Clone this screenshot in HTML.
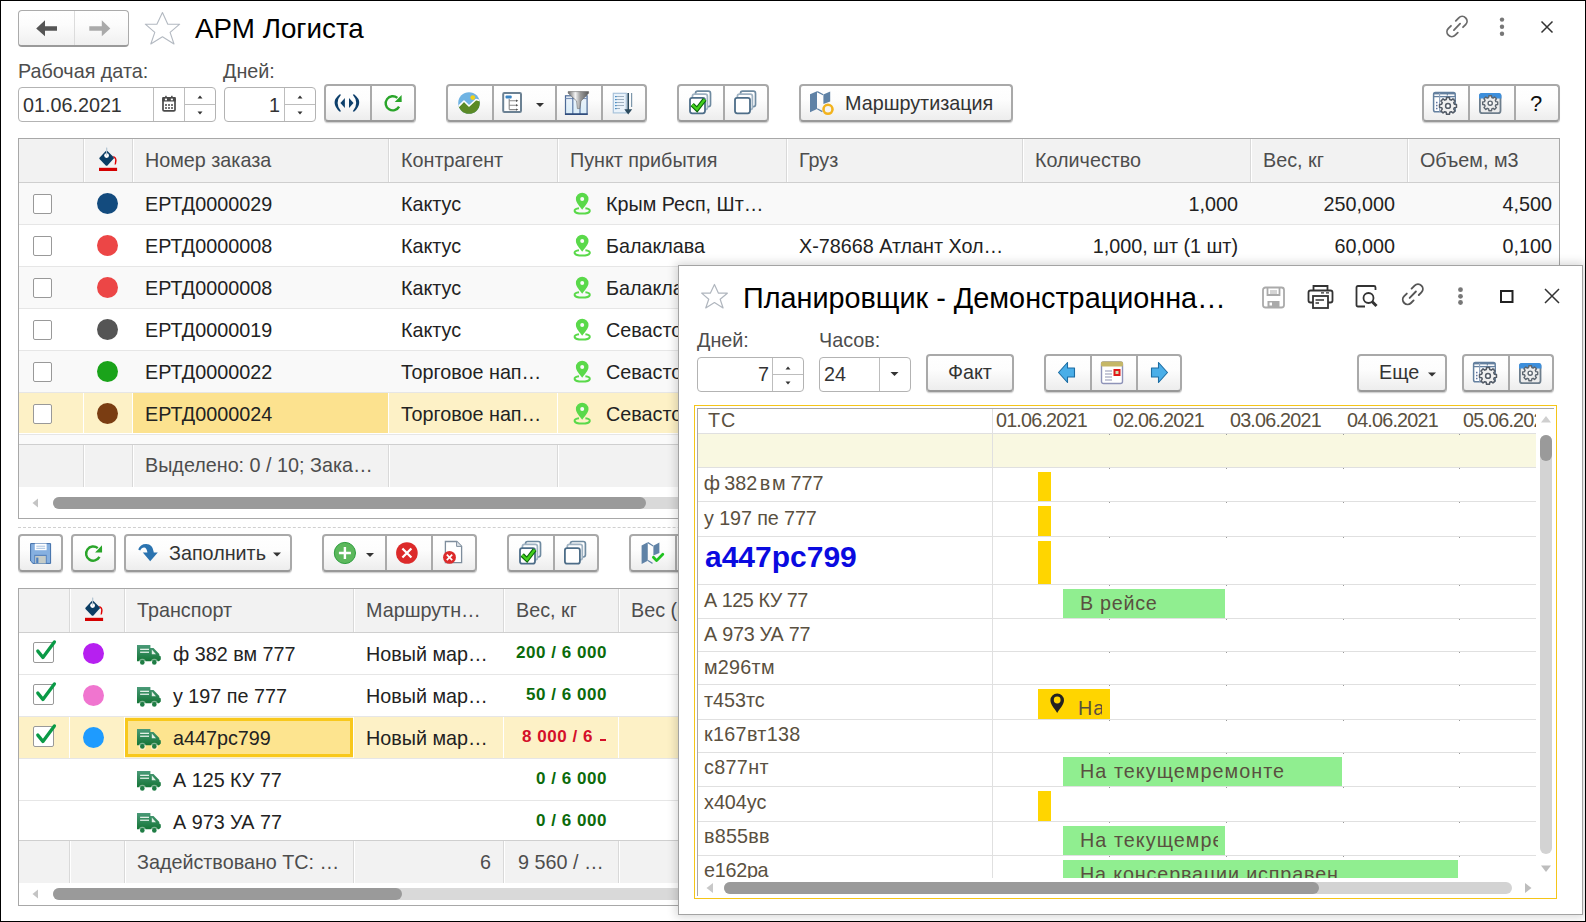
<!DOCTYPE html><html><head><meta charset="utf-8"><style>
html,body{margin:0;padding:0}
body{width:1586px;height:922px;position:relative;overflow:hidden;background:#fff;font-family:'Liberation Sans', sans-serif}
div,svg{box-sizing:content-box}
.btn{position:absolute;border:2px solid #a9a9a9;border-bottom-color:#999;border-radius:4px;background:linear-gradient(#ffffff 0%,#fdfdfd 40%,#ededed 100%);box-shadow:0 1px 0 #d2d2d2,0 2px 1px rgba(0,0,0,0.05)}
.fld{position:absolute;border:1px solid #b3b3b3;border-radius:4px;background:#fff}
</style></head><body>

<div style="position:absolute;left:0;top:0;width:1584px;height:920px;border:1px solid #000;z-index:100;pointer-events:none"></div>
<div style="position:absolute;left:18px;top:10px;width:109px;height:34px;border:1px solid #ababab;border-bottom:2px solid #9a9a9a;border-radius:4px;background:linear-gradient(#fff 0%,#fcfcfc 40%,#f0f0f0 100%)"></div>
<div style="position:absolute;left:74px;top:11px;width:1px;height:34px;background:#dcdcdc"></div>
<svg style="position:absolute;left:30px;top:15px;" width="90" height="27" viewBox="30 15 90 27"><path d="M36.2 28.5 L45 20.3 L45 26.2 L57 26.2 L57 30.7 L45 30.7 L45 36.3Z" fill="#555"/><path d="M110.3 28.5 L101.8 20.3 L101.8 26.2 L89.3 26.2 L89.3 30.7 L101.8 30.7 L101.8 36.3Z" fill="#aaa"/></svg>
<svg style="position:absolute;left:140px;top:8px;" width="46" height="42" viewBox="140 8 46 42"><path d="M162.45 12.6 L167.8 24.2 L179.7 24.2 L170.1 32.4 L174 44 L162.45 36.7 L150.8 44 L154.8 32.4 L145.3 24.2 L156.9 24.2Z" fill="none" stroke="#b3b9c1" stroke-width="1.1" stroke-linejoin="round"/></svg>
<div style="position:absolute;left:195px;top:14.87px;font-size:27.8px;line-height:27.8px;color:#000;font-weight:400;white-space:pre;">АРМ Логиста</div>
<svg style="position:absolute;left:1440px;top:10px;" width="35" height="35" viewBox="1440 10 35 35"><g fill="none" stroke="#6a6a6a" stroke-width="1.8" stroke-linecap="round"><path d="M1455.8 20.8 L1458.8 17.8 A4.8 4.8 0 0 1 1465.6 24.6 L1463 27.2"/><path d="M1451 25.8 L1448.4 28.4 A4.8 4.8 0 0 0 1455.2 35.2 L1457.8 32.6"/><path d="M1453.9 30.1 L1460.1 23.7"/></g></svg>
<svg style="position:absolute;left:1494px;top:14px;" width="16" height="26" viewBox="1494 14 16 26"><g fill="#777"><circle cx="1502" cy="19.6" r="2.2"/><circle cx="1502" cy="26.8" r="2.2"/><circle cx="1502" cy="33.8" r="2.2"/></g></svg>
<svg style="position:absolute;left:1536px;top:16px;" width="22" height="22" viewBox="1536 16 22 22"><path d="M1541.5 21.5 L1552.5 32.5 M1552.5 21.5 L1541.5 32.5" stroke="#333" stroke-width="1.5"/></svg>
<div style="position:absolute;left:18px;top:61.88px;font-size:19.75px;line-height:19.75px;color:#4d4d4d;font-weight:400;white-space:pre;">Рабочая дата:</div>
<div style="position:absolute;left:223px;top:61.88px;font-size:19.75px;line-height:19.75px;color:#4d4d4d;font-weight:400;white-space:pre;">Дней:</div>
<div class="fld" style="left:18px;top:87px;width:196px;height:33px"></div>
<div style="position:absolute;left:153px;top:88px;width:1px;height:33px;background:#bdbdbd"></div>
<div style="position:absolute;left:184px;top:88px;width:1px;height:33px;background:#bdbdbd"></div>
<div style="position:absolute;left:184px;top:104px;width:31px;height:1px;background:#bdbdbd"></div>
<div style="position:absolute;left:23px;top:96.28px;font-size:19.75px;line-height:19.75px;color:#333;font-weight:400;white-space:pre;">01.06.2021</div>
<svg style="position:absolute;left:158px;top:92px;" width="22" height="24" viewBox="158 92 22 24"><rect x="163" y="97.9" width="12" height="13" rx="1.2" fill="#fff" stroke="#4a4a4a" stroke-width="1.7"/><rect x="162.2" y="97.1" width="13.6" height="4.5" rx="1" fill="#4a4a4a"/><rect x="164.9" y="98.6" width="2.1" height="1.7" fill="#fff"/><rect x="170.8" y="98.6" width="2.1" height="1.7" fill="#fff"/><rect x="165.2" y="95.8" width="1.5" height="2" fill="#4a4a4a"/><rect x="171.1" y="95.8" width="1.5" height="2" fill="#4a4a4a"/><g fill="#2a2a2a"><rect x="165.2" y="104.2" width="1.6" height="1.6"/><rect x="168.2" y="104.2" width="1.6" height="1.6"/><rect x="171.2" y="104.2" width="1.6" height="1.6"/><rect x="165.2" y="107.2" width="1.6" height="1.6"/><rect x="168.2" y="107.2" width="1.6" height="1.6"/><rect x="171.2" y="107.2" width="1.6" height="1.6"/></g></svg>
<svg style="position:absolute;left:195.5px;top:94.4px;" width="8.0" height="6.0" viewBox="195.5 94.4 8.0 6.0"><path d="M199.5 95.9 L202.0 98.80000000000001 L197.0 98.80000000000001Z" fill="#333"/></svg>
<svg style="position:absolute;left:195.5px;top:109.6px;" width="8.0" height="6.0" viewBox="195.5 109.6 8.0 6.0"><path d="M197.0 111.19999999999999 L202.0 111.19999999999999 L199.5 114.1Z" fill="#333"/></svg>
<div class="fld" style="left:224px;top:87px;width:90px;height:33px"></div>
<div style="position:absolute;left:284px;top:88px;width:1px;height:33px;background:#bdbdbd"></div>
<div style="position:absolute;left:284px;top:104px;width:31px;height:1px;background:#bdbdbd"></div>
<div style="position:absolute;right:1306px;top:96.28px;font-size:19.75px;line-height:19.75px;color:#333;font-weight:400;white-space:pre;text-align:right;">1</div>
<svg style="position:absolute;left:296px;top:94.4px;" width="8" height="6.0" viewBox="296 94.4 8 6.0"><path d="M300 95.9 L302.5 98.80000000000001 L297.5 98.80000000000001Z" fill="#333"/></svg>
<svg style="position:absolute;left:296px;top:109.6px;" width="8" height="6.0" viewBox="296 109.6 8 6.0"><path d="M297.5 111.19999999999999 L302.5 111.19999999999999 L300 114.1Z" fill="#333"/></svg>
<div class="btn" style="left:324px;top:84px;width:88px;height:34px"></div>
<div style="position:absolute;left:370px;top:86px;width:2px;height:34px;background:#aaaaaa"></div>
<svg style="position:absolute;left:332px;top:90px;" width="30" height="26" viewBox="332 90 30 26"><g fill="#0d3f6b"><path d="M339.8 94.2 Q334.2 98.5 334.6 103 Q334.9 107.6 339.8 111.8 L341 111.3 Q337.6 107.4 337.6 103 Q337.6 98.6 341 94.7Z"/><path d="M354 94.2 Q359.6 98.5 359.2 103 Q358.9 107.6 354 111.8 L352.8 111.3 Q356.2 107.4 356.2 103 Q356.2 98.6 352.8 94.7Z"/><path d="M340.4 102.9 L344.9 97.9 L344.9 107.9Z"/><path d="M353.5 102.9 L349 97.9 L349 107.9Z"/></g></svg>
<svg style="position:absolute;left:380px;top:90px;" width="26" height="26" viewBox="380 90 26 26"><path d="M397.36 97.86 A7.1 7.1 0 1 0 399.07 106.63" fill="none" stroke="#2aa52a" stroke-width="2.4"/><path d="M401.60 94.90 L394.70 102.10 L401.70 102.10Z" fill="#2aa52a"/></svg>
<div class="btn" style="left:446px;top:84px;width:197px;height:34px"></div>
<div style="position:absolute;left:492px;top:86px;width:2px;height:34px;background:#aaaaaa"></div>
<div style="position:absolute;left:555px;top:86px;width:2px;height:34px;background:#aaaaaa"></div>
<div style="position:absolute;left:601px;top:86px;width:2px;height:34px;background:#aaaaaa"></div>
<svg style="position:absolute;left:455px;top:89px;" width="29" height="28" viewBox="455 89 29 28"><defs><clipPath id="lc"><circle cx="469" cy="103" r="10.8"/></clipPath></defs><g clip-path="url(#lc)"><rect x="455" y="89" width="30" height="30" fill="#6fb3e3"/><circle cx="472.8" cy="97.6" r="2.4" fill="#f2d21a"/><path d="M455 110 L464 101 L469 106 L476 99.5 L485 102 L485 118 L455 118Z" fill="#5b8a26" stroke="#fff" stroke-width="1.6" stroke-linejoin="round"/></g></svg>
<svg style="position:absolute;left:500px;top:90px;" width="24" height="25" viewBox="500 90 24 25"><rect x="503.2" y="93.1" width="17.8" height="18.8" rx="1.2" fill="#fff" stroke="#6b8193" stroke-width="2"/><rect x="505.5" y="95.6" width="6.2" height="3" rx="1" fill="#3a85c4"/><path d="M509.2 99 L509.2 109.6 M509.2 100.8 L516.5 100.8 M509.2 105.3 L516.5 105.3 M509.2 109.6 L516.5 109.6" stroke="#8a8a8a" stroke-width="1.1" fill="none"/><path d="M516 99.6 L518.3 100.8 L516 102Z M516 104.1 L518.3 105.3 L516 106.5Z M516 108.4 L518.3 109.6 L516 110.8Z" fill="#555"/></svg>
<svg style="position:absolute;left:534px;top:101px;" width="12" height="8" viewBox="534 101 12 8"><path d="M536 103 L544 103 L540 107Z" fill="#333"/></svg>
<svg style="position:absolute;left:562px;top:89px;" width="30" height="28" viewBox="562 89 30 28"><defs><linearGradient id="tb" x1="0" y1="0" x2="0" y2="1"><stop offset="0" stop-color="#eef4fb"/><stop offset="1" stop-color="#d8ecf8"/></linearGradient><linearGradient id="fn" x1="0" y1="0" x2="1" y2="0"><stop offset="0" stop-color="#6a6a6a"/><stop offset="0.35" stop-color="#f4f4f4"/><stop offset="0.6" stop-color="#9a9a9a"/><stop offset="1" stop-color="#5a5a5a"/></linearGradient></defs><rect x="565.5" y="95.8" width="21.6" height="18.6" fill="url(#tb)" stroke="#4d6a96" stroke-width="1.2"/><path d="M565.5 98.5 L587 98.5" stroke="#7a92b8" stroke-width="1.2"/><path d="M572.8 96 L572.8 114 M580 96 L580 114" stroke="#5a78a6" stroke-width="1.2"/><rect x="565" y="113.3" width="22.6" height="1.6" fill="#2d4a7a"/><path d="M568.2 91.6 L588.6 91.6 L588.6 93.2 L581 101 L579.8 108.6 L577.4 108.6 L576.6 101 L568.2 93.2Z" fill="url(#fn)" stroke="#666" stroke-width="0.6"/></svg>
<svg style="position:absolute;left:610px;top:90px;" width="26" height="27" viewBox="610 90 26 27"><rect x="613.3" y="93.3" width="13" height="19.6" fill="#eaf3fb" stroke="#a9c3da" stroke-width="1.2"/><g stroke="#9fb0c0" stroke-width="1.2"><path d="M616 96.5 L624 96.5 M616 99.5 L624 99.5 M616 102.5 L624 102.5 M616 105.5 L624 105.5 M616 108.5 L620 108.5"/></g><g fill="#4a90c8"><rect x="615" y="96" width="1.6" height="1.2"/><rect x="615" y="99" width="1.6" height="1.2"/><rect x="615" y="102" width="1.6" height="1.2"/><rect x="615" y="105" width="1.6" height="1.2"/><rect x="615" y="108" width="1.6" height="1.2"/></g><path d="M631.6 93 L631.6 107" stroke="#7d97ab" stroke-width="1.2"/><path d="M628.2 93 L628.2 110" stroke="#2b4a5e" stroke-width="1.6"/><path d="M624.3 109.2 L632.2 109.2 L628.2 114.6Z" fill="#2b4a5e"/></svg>
<div class="btn" style="left:677px;top:84px;width:88px;height:34px"></div>
<div style="position:absolute;left:723px;top:86px;width:2px;height:34px;background:#aaaaaa"></div>
<svg style="position:absolute;left:684px;top:86px;" width="32" height="32" viewBox="684 86 32 32"><rect x="695.5" y="91.19999999999999" width="15" height="15.5" rx="2.2" fill="#fff" stroke="#6e8aa0" stroke-width="1.7"/><rect x="692.4000000000001" y="94.1" width="15" height="15.5" rx="2.2" fill="#fff" stroke="#9fb2c2" stroke-width="1.7"/><rect x="690.0" y="97.89999999999999" width="15" height="15.4" rx="2.2" fill="#fff" stroke="#4d6d88" stroke-width="1.8"/><path d="M692.2 104.69999999999999 L697.0 109.3 L704.7 99.39999999999999" fill="none" stroke="#0a650a" stroke-width="4.6" stroke-linejoin="miter"/><path d="M692.2 104.69999999999999 L697.0 109.3 L704.7 99.39999999999999" fill="none" stroke="#43d11c" stroke-width="2.4" stroke-linejoin="miter"/></svg>
<svg style="position:absolute;left:730px;top:86px;" width="32" height="32" viewBox="730 86 32 32"><rect x="740.5" y="91.19999999999999" width="15" height="15.5" rx="2.2" fill="#fff" stroke="#6e8aa0" stroke-width="1.7"/><rect x="737.4000000000001" y="94.1" width="15" height="15.5" rx="2.2" fill="#fff" stroke="#9fb2c2" stroke-width="1.7"/><rect x="735.0" y="97.89999999999999" width="15" height="15.4" rx="2.2" fill="#fff" stroke="#4d6d88" stroke-width="1.8"/></svg>
<div class="btn" style="left:799px;top:84px;width:210px;height:34px"></div>
<svg style="position:absolute;left:806px;top:88px;" width="30" height="28" viewBox="806 88 30 28"><path d="M810 94.3 L817 91.2 L817 109 L810 112.2Z" fill="#5f82a6"/><path d="M817 91.2 L823.4 94.6 L823.4 104 L830.2 101.6 L830.2 91.4 L823.4 94.6" fill="#5f82a6"/><path d="M817.2 91.6 L823.2 94.8 M817.2 108.8 L822.4 111.6" stroke="#5f82a6" stroke-width="1.2"/><circle cx="828" cy="109.3" r="4.5" fill="#f4f4f4" stroke="#f2b31e" stroke-width="2.6"/></svg>
<div style="position:absolute;left:845px;top:94.28px;font-size:19.75px;line-height:19.75px;color:#333;font-weight:400;white-space:pre;">Маршрутизация</div>
<div class="btn" style="left:1422px;top:84px;width:134px;height:34px"></div>
<div style="position:absolute;left:1468px;top:86px;width:2px;height:34px;background:#aaaaaa"></div>
<div style="position:absolute;left:1514px;top:86px;width:2px;height:34px;background:#aaaaaa"></div>
<svg style="position:absolute;left:1430px;top:88px;" width="30" height="29" viewBox="1430 88 30 29"><rect x="1433.6" y="92.6" width="21.6" height="19.2" rx="1.8" fill="#fff" stroke="#64809f" stroke-width="1.5"/><path d="M1433.6 96.6 L1455.2 96.6" stroke="#64809f" stroke-width="1.3"/><path d="M1433.6 93.6 L1455.2 93.6" stroke="#64809f" stroke-width="1.6"/><path d="M1439.6 93 L1439.6 111.8" stroke="#8ea3bd" stroke-width="1.1"/><path d="M1447.3 93 L1447.3 95.5" stroke="#64809f" stroke-width="1.1"/><path d="M1440 97.6 L1455 97.6" stroke="#c9d4e2" stroke-width="1"/><g fill="#5f73a0"><rect x="1436" y="101.8" width="1.5" height="1.5"/><rect x="1436" y="104.8" width="1.5" height="1.5"/><rect x="1436" y="107.8" width="1.5" height="1.5"/></g><path d="M1454.36 104.14 L1456.47 104.42 L1456.47 107.38 L1454.36 107.66 L1453.74 109.15 L1455.04 110.85 L1452.95 112.94 L1451.25 111.64 L1449.76 112.26 L1449.48 114.37 L1446.52 114.37 L1446.24 112.26 L1444.75 111.64 L1443.05 112.94 L1440.96 110.85 L1442.26 109.15 L1441.64 107.66 L1439.53 107.38 L1439.53 104.42 L1441.64 104.14 L1442.26 102.65 L1440.96 100.95 L1443.05 98.86 L1444.75 100.16 L1446.24 99.54 L1446.52 97.43 L1449.48 97.43 L1449.76 99.54 L1451.25 100.16 L1452.95 98.86 L1455.04 100.95 L1453.74 102.65Z" fill="#f0f0f0" stroke="#535b66" stroke-width="1.5" stroke-linejoin="round"/><circle cx="1448" cy="105.9" r="2.4" fill="#fff" stroke="#535b66" stroke-width="1.5"/></svg>
<svg style="position:absolute;left:1476px;top:88px;" width="30" height="29" viewBox="1476 88 30 29"><rect x="1479.9" y="93.8" width="20.6" height="19.4" rx="2.5" fill="#ececec" stroke="#6e7e8c" stroke-width="1.8"/><path d="M1479 98.5 L1479 95.5 Q1479 93 1482 93 L1498.5 93 Q1501.4 93 1501.4 95.5 L1501.4 98.5Z" fill="#3d8fdc"/><path d="M1495.89 101.63 L1497.69 101.89 L1497.69 104.51 L1495.89 104.77 L1495.33 106.11 L1496.42 107.57 L1494.57 109.42 L1493.11 108.33 L1491.77 108.89 L1491.51 110.69 L1488.89 110.69 L1488.63 108.89 L1487.29 108.33 L1485.83 109.42 L1483.98 107.57 L1485.07 106.11 L1484.51 104.77 L1482.71 104.51 L1482.71 101.89 L1484.51 101.63 L1485.07 100.29 L1483.98 98.83 L1485.83 96.98 L1487.29 98.07 L1488.63 97.51 L1488.89 95.71 L1491.51 95.71 L1491.77 97.51 L1493.11 98.07 L1494.57 96.98 L1496.42 98.83 L1495.33 100.29Z" fill="#eeeeee" stroke="#5d6670" stroke-width="1.4" stroke-linejoin="round"/><circle cx="1490.2" cy="103.2" r="2.1" fill="#fff" stroke="#5d6670" stroke-width="1.4"/></svg>
<div style="position:absolute;left:1530px;top:93.38px;font-size:22px;line-height:22px;color:#111;font-weight:400;white-space:pre;">?</div>
<div style="position:absolute;left:18px;top:138px;width:1540px;height:379px;border:1px solid #a8a8a8;background:#fff"></div>
<div style="position:absolute;left:19px;top:139px;width:1540px;height:43px;background:#f2f2f2"></div>
<div style="position:absolute;left:19px;top:182px;width:1540px;height:1px;background:#cfcfcf"></div>
<div style="position:absolute;left:83px;top:139px;width:1px;height:43px;background:#d9d9d9"></div>
<div style="position:absolute;left:84px;top:139px;width:1px;height:43px;background:#fff"></div>
<div style="position:absolute;left:132px;top:139px;width:1px;height:43px;background:#d9d9d9"></div>
<div style="position:absolute;left:133px;top:139px;width:1px;height:43px;background:#fff"></div>
<div style="position:absolute;left:388px;top:139px;width:1px;height:43px;background:#d9d9d9"></div>
<div style="position:absolute;left:389px;top:139px;width:1px;height:43px;background:#fff"></div>
<div style="position:absolute;left:557px;top:139px;width:1px;height:43px;background:#d9d9d9"></div>
<div style="position:absolute;left:558px;top:139px;width:1px;height:43px;background:#fff"></div>
<div style="position:absolute;left:786px;top:139px;width:1px;height:43px;background:#d9d9d9"></div>
<div style="position:absolute;left:787px;top:139px;width:1px;height:43px;background:#fff"></div>
<div style="position:absolute;left:1022px;top:139px;width:1px;height:43px;background:#d9d9d9"></div>
<div style="position:absolute;left:1023px;top:139px;width:1px;height:43px;background:#fff"></div>
<div style="position:absolute;left:1250px;top:139px;width:1px;height:43px;background:#d9d9d9"></div>
<div style="position:absolute;left:1251px;top:139px;width:1px;height:43px;background:#fff"></div>
<div style="position:absolute;left:1407px;top:139px;width:1px;height:43px;background:#d9d9d9"></div>
<div style="position:absolute;left:1408px;top:139px;width:1px;height:43px;background:#fff"></div>
<div style="position:absolute;left:145px;top:151.28px;font-size:19.75px;line-height:19.75px;color:#4d4d4d;font-weight:400;white-space:pre;">Номер заказа</div>
<div style="position:absolute;left:401px;top:151.28px;font-size:19.75px;line-height:19.75px;color:#4d4d4d;font-weight:400;white-space:pre;">Контрагент</div>
<div style="position:absolute;left:570px;top:151.28px;font-size:19.75px;line-height:19.75px;color:#4d4d4d;font-weight:400;white-space:pre;">Пункт прибытия</div>
<div style="position:absolute;left:799px;top:151.28px;font-size:19.75px;line-height:19.75px;color:#4d4d4d;font-weight:400;white-space:pre;">Груз</div>
<div style="position:absolute;left:1035px;top:151.28px;font-size:19.75px;line-height:19.75px;color:#4d4d4d;font-weight:400;white-space:pre;">Количество</div>
<div style="position:absolute;left:1263px;top:151.28px;font-size:19.75px;line-height:19.75px;color:#4d4d4d;font-weight:400;white-space:pre;">Вес, кг</div>
<div style="position:absolute;left:1420px;top:151.28px;font-size:19.75px;line-height:19.75px;color:#4d4d4d;font-weight:400;white-space:pre;">Объем, м3</div>
<svg style="position:absolute;left:94px;top:145px;" width="25" height="27" viewBox="94 145 25 27"><path d="M106.6 147.8 L106.6 155.4" stroke="#a9bccc" stroke-width="1.2"/><path d="M106.6 150.8 Q107.19999999999999 150.8 107.69999999999999 151.3 L113.69999999999999 157.3 Q114.19999999999999 157.9 113.69999999999999 158.5 L107.69999999999999 165.3 Q106.6 166.4 105.5 165.3 L99.5 159.0 Q99.0 158.4 99.5 157.8 L105.5 151.3 Q106.0 150.8 106.6 150.8Z" fill="#0b3d64"/><circle cx="106.6" cy="155.6" r="2.4" fill="#fff"/><path d="M106.6 147.8 L106.6 155.6" stroke="#b9c9d6" stroke-width="1"/><path d="M112.8 155.8 Q116.8 157.0 116.6 160.8 L116.0 164.20000000000002 L114.6 164.8 L115.19999999999999 159.6Z" fill="#e00000"/><rect x="99.0" y="167.8" width="18.1" height="3.2" fill="#d40000"/></svg>
<div style="position:absolute;left:19px;top:183px;width:1540px;height:41px;background:#f9f9f9"></div>
<div style="position:absolute;left:19px;top:224px;width:1540px;height:1px;background:#e6e6e6"></div>
<div style="position:absolute;left:33px;top:194px;width:17px;height:18px;border:1px solid #999;border-radius:2px;background:#fff"></div>
<div style="position:absolute;left:97px;top:193px;width:21px;height:21px;border-radius:50%;background:#134b7e"></div>
<div style="position:absolute;left:145px;top:195.28px;font-size:19.75px;line-height:19.75px;color:#222;font-weight:400;white-space:pre;">ЕРТД0000029</div>
<div style="position:absolute;left:401px;top:195.28px;font-size:19.75px;line-height:19.75px;color:#222;font-weight:400;white-space:pre;">Кактус</div>
<svg style="position:absolute;left:572px;top:191px;" width="21" height="25" viewBox="572 191 21 25"><path d="M582.2 209.7 C580.0 206.6 575.9000000000001 202.8 575.9000000000001 199 A6.3 6.3 0 0 1 588.5 199 C588.5 202.8 584.4000000000001 206.6 582.2 209.7Z" fill="#5ad94a"/><circle cx="582.2" cy="199.1" r="2" fill="#fafafa"/><path d="M579.0 208.2 C572.7 208.8 572.6 213.6 582.2 213.6 C591.8000000000001 213.6 591.7 208.8 585.4000000000001 208.2" fill="none" stroke="#5ad94a" stroke-width="2"/></svg>
<div style="position:absolute;left:606px;top:195.28px;font-size:19.75px;line-height:19.75px;color:#222;font-weight:400;white-space:pre;">Крым Респ, Шт…</div>
<div style="position:absolute;right:348px;top:195.28px;font-size:19.75px;line-height:19.75px;color:#222;font-weight:400;white-space:pre;text-align:right;">1,000</div>
<div style="position:absolute;right:191px;top:195.28px;font-size:19.75px;line-height:19.75px;color:#222;font-weight:400;white-space:pre;text-align:right;">250,000</div>
<div style="position:absolute;right:34px;top:195.28px;font-size:19.75px;line-height:19.75px;color:#222;font-weight:400;white-space:pre;text-align:right;">4,500</div>
<div style="position:absolute;left:19px;top:225px;width:1540px;height:41px;background:#ffffff"></div>
<div style="position:absolute;left:19px;top:266px;width:1540px;height:1px;background:#e6e6e6"></div>
<div style="position:absolute;left:33px;top:236px;width:17px;height:18px;border:1px solid #999;border-radius:2px;background:#fff"></div>
<div style="position:absolute;left:97px;top:235px;width:21px;height:21px;border-radius:50%;background:#ec4646"></div>
<div style="position:absolute;left:145px;top:237.28px;font-size:19.75px;line-height:19.75px;color:#222;font-weight:400;white-space:pre;">ЕРТД0000008</div>
<div style="position:absolute;left:401px;top:237.28px;font-size:19.75px;line-height:19.75px;color:#222;font-weight:400;white-space:pre;">Кактус</div>
<svg style="position:absolute;left:572px;top:233px;" width="21" height="25" viewBox="572 233 21 25"><path d="M582.2 251.7 C580.0 248.6 575.9000000000001 244.8 575.9000000000001 241 A6.3 6.3 0 0 1 588.5 241 C588.5 244.8 584.4000000000001 248.6 582.2 251.7Z" fill="#5ad94a"/><circle cx="582.2" cy="241.1" r="2" fill="#fafafa"/><path d="M579.0 250.2 C572.7 250.8 572.6 255.6 582.2 255.6 C591.8000000000001 255.6 591.7 250.8 585.4000000000001 250.2" fill="none" stroke="#5ad94a" stroke-width="2"/></svg>
<div style="position:absolute;left:606px;top:237.28px;font-size:19.75px;line-height:19.75px;color:#222;font-weight:400;white-space:pre;">Балаклава</div>
<div style="position:absolute;left:799px;top:237.28px;font-size:19.75px;line-height:19.75px;color:#222;font-weight:400;white-space:pre;">X-78668 Атлант Хол…</div>
<div style="position:absolute;right:348px;top:237.28px;font-size:19.75px;line-height:19.75px;color:#222;font-weight:400;white-space:pre;text-align:right;">1,000, шт (1 шт)</div>
<div style="position:absolute;right:191px;top:237.28px;font-size:19.75px;line-height:19.75px;color:#222;font-weight:400;white-space:pre;text-align:right;">60,000</div>
<div style="position:absolute;right:34px;top:237.28px;font-size:19.75px;line-height:19.75px;color:#222;font-weight:400;white-space:pre;text-align:right;">0,100</div>
<div style="position:absolute;left:19px;top:267px;width:1540px;height:41px;background:#f9f9f9"></div>
<div style="position:absolute;left:19px;top:308px;width:1540px;height:1px;background:#e6e6e6"></div>
<div style="position:absolute;left:33px;top:278px;width:17px;height:18px;border:1px solid #999;border-radius:2px;background:#fff"></div>
<div style="position:absolute;left:97px;top:277px;width:21px;height:21px;border-radius:50%;background:#ec4646"></div>
<div style="position:absolute;left:145px;top:279.28px;font-size:19.75px;line-height:19.75px;color:#222;font-weight:400;white-space:pre;">ЕРТД0000008</div>
<div style="position:absolute;left:401px;top:279.28px;font-size:19.75px;line-height:19.75px;color:#222;font-weight:400;white-space:pre;">Кактус</div>
<svg style="position:absolute;left:572px;top:275px;" width="21" height="25" viewBox="572 275 21 25"><path d="M582.2 293.7 C580.0 290.6 575.9000000000001 286.8 575.9000000000001 283 A6.3 6.3 0 0 1 588.5 283 C588.5 286.8 584.4000000000001 290.6 582.2 293.7Z" fill="#5ad94a"/><circle cx="582.2" cy="283.1" r="2" fill="#fafafa"/><path d="M579.0 292.2 C572.7 292.8 572.6 297.6 582.2 297.6 C591.8000000000001 297.6 591.7 292.8 585.4000000000001 292.2" fill="none" stroke="#5ad94a" stroke-width="2"/></svg>
<div style="position:absolute;left:606px;top:279.28px;font-size:19.75px;line-height:19.75px;color:#222;font-weight:400;white-space:pre;">Балаклава</div>
<div style="position:absolute;left:19px;top:309px;width:1540px;height:41px;background:#ffffff"></div>
<div style="position:absolute;left:19px;top:350px;width:1540px;height:1px;background:#e6e6e6"></div>
<div style="position:absolute;left:33px;top:320px;width:17px;height:18px;border:1px solid #999;border-radius:2px;background:#fff"></div>
<div style="position:absolute;left:97px;top:319px;width:21px;height:21px;border-radius:50%;background:#555555"></div>
<div style="position:absolute;left:145px;top:321.28px;font-size:19.75px;line-height:19.75px;color:#222;font-weight:400;white-space:pre;">ЕРТД0000019</div>
<div style="position:absolute;left:401px;top:321.28px;font-size:19.75px;line-height:19.75px;color:#222;font-weight:400;white-space:pre;">Кактус</div>
<svg style="position:absolute;left:572px;top:317px;" width="21" height="25" viewBox="572 317 21 25"><path d="M582.2 335.7 C580.0 332.6 575.9000000000001 328.8 575.9000000000001 325 A6.3 6.3 0 0 1 588.5 325 C588.5 328.8 584.4000000000001 332.6 582.2 335.7Z" fill="#5ad94a"/><circle cx="582.2" cy="325.1" r="2" fill="#fafafa"/><path d="M579.0 334.2 C572.7 334.8 572.6 339.6 582.2 339.6 C591.8000000000001 339.6 591.7 334.8 585.4000000000001 334.2" fill="none" stroke="#5ad94a" stroke-width="2"/></svg>
<div style="position:absolute;left:606px;top:321.28px;font-size:19.75px;line-height:19.75px;color:#222;font-weight:400;white-space:pre;">Севастополь</div>
<div style="position:absolute;left:19px;top:351px;width:1540px;height:41px;background:#f9f9f9"></div>
<div style="position:absolute;left:19px;top:392px;width:1540px;height:1px;background:#e6e6e6"></div>
<div style="position:absolute;left:33px;top:362px;width:17px;height:18px;border:1px solid #999;border-radius:2px;background:#fff"></div>
<div style="position:absolute;left:97px;top:361px;width:21px;height:21px;border-radius:50%;background:#1aa31a"></div>
<div style="position:absolute;left:145px;top:363.28px;font-size:19.75px;line-height:19.75px;color:#222;font-weight:400;white-space:pre;">ЕРТД0000022</div>
<div style="position:absolute;left:401px;top:363.28px;font-size:19.75px;line-height:19.75px;color:#222;font-weight:400;white-space:pre;">Торговое нап…</div>
<svg style="position:absolute;left:572px;top:359px;" width="21" height="25" viewBox="572 359 21 25"><path d="M582.2 377.7 C580.0 374.6 575.9000000000001 370.8 575.9000000000001 367 A6.3 6.3 0 0 1 588.5 367 C588.5 370.8 584.4000000000001 374.6 582.2 377.7Z" fill="#5ad94a"/><circle cx="582.2" cy="367.1" r="2" fill="#fafafa"/><path d="M579.0 376.2 C572.7 376.8 572.6 381.6 582.2 381.6 C591.8000000000001 381.6 591.7 376.8 585.4000000000001 376.2" fill="none" stroke="#5ad94a" stroke-width="2"/></svg>
<div style="position:absolute;left:606px;top:363.28px;font-size:19.75px;line-height:19.75px;color:#222;font-weight:400;white-space:pre;">Севастополь</div>
<div style="position:absolute;left:19px;top:393px;width:1540px;height:41px;background:#fdf1c6"></div>
<div style="position:absolute;left:19px;top:434px;width:1540px;height:1px;background:#e6e6e6"></div>
<div style="position:absolute;left:133px;top:393px;width:255px;height:41px;background:#fce28f"></div>
<div style="position:absolute;left:83px;top:393px;width:1px;height:41px;background:#fff"></div>
<div style="position:absolute;left:132px;top:393px;width:1px;height:41px;background:#fff"></div>
<div style="position:absolute;left:388px;top:393px;width:1px;height:41px;background:#fff"></div>
<div style="position:absolute;left:557px;top:393px;width:1px;height:41px;background:#fff"></div>
<div style="position:absolute;left:786px;top:393px;width:1px;height:41px;background:#fff"></div>
<div style="position:absolute;left:1022px;top:393px;width:1px;height:41px;background:#fff"></div>
<div style="position:absolute;left:1250px;top:393px;width:1px;height:41px;background:#fff"></div>
<div style="position:absolute;left:1407px;top:393px;width:1px;height:41px;background:#fff"></div>
<div style="position:absolute;left:19px;top:433px;width:1540px;height:1px;background:#fff"></div>
<div style="position:absolute;left:33px;top:404px;width:17px;height:18px;border:1px solid #999;border-radius:2px;background:#fff"></div>
<div style="position:absolute;left:97px;top:403px;width:21px;height:21px;border-radius:50%;background:#7a3d12"></div>
<div style="position:absolute;left:145px;top:405.28px;font-size:19.75px;line-height:19.75px;color:#222;font-weight:400;white-space:pre;">ЕРТД0000024</div>
<div style="position:absolute;left:401px;top:405.28px;font-size:19.75px;line-height:19.75px;color:#222;font-weight:400;white-space:pre;">Торговое нап…</div>
<svg style="position:absolute;left:572px;top:401px;" width="21" height="25" viewBox="572 401 21 25"><path d="M582.2 419.7 C580.0 416.6 575.9000000000001 412.8 575.9000000000001 409 A6.3 6.3 0 0 1 588.5 409 C588.5 412.8 584.4000000000001 416.6 582.2 419.7Z" fill="#5ad94a"/><circle cx="582.2" cy="409.1" r="2" fill="#fafafa"/><path d="M579.0 418.2 C572.7 418.8 572.6 423.6 582.2 423.6 C591.8000000000001 423.6 591.7 418.8 585.4000000000001 418.2" fill="none" stroke="#5ad94a" stroke-width="2"/></svg>
<div style="position:absolute;left:606px;top:405.28px;font-size:19.75px;line-height:19.75px;color:#222;font-weight:400;white-space:pre;">Севастополь</div>
<div style="position:absolute;left:19px;top:435px;width:1540px;height:9px;background:#fafafa"></div>
<div style="position:absolute;left:19px;top:444px;width:1540px;height:1px;background:#cfcfcf"></div>
<div style="position:absolute;left:19px;top:445px;width:1540px;height:42px;background:#f2f2f2"></div>
<div style="position:absolute;left:83px;top:445px;width:1px;height:42px;background:#d9d9d9"></div>
<div style="position:absolute;left:84px;top:445px;width:1px;height:42px;background:#fff"></div>
<div style="position:absolute;left:132px;top:445px;width:1px;height:42px;background:#d9d9d9"></div>
<div style="position:absolute;left:133px;top:445px;width:1px;height:42px;background:#fff"></div>
<div style="position:absolute;left:388px;top:445px;width:1px;height:42px;background:#d9d9d9"></div>
<div style="position:absolute;left:389px;top:445px;width:1px;height:42px;background:#fff"></div>
<div style="position:absolute;left:557px;top:445px;width:1px;height:42px;background:#d9d9d9"></div>
<div style="position:absolute;left:558px;top:445px;width:1px;height:42px;background:#fff"></div>
<div style="position:absolute;left:786px;top:445px;width:1px;height:42px;background:#d9d9d9"></div>
<div style="position:absolute;left:787px;top:445px;width:1px;height:42px;background:#fff"></div>
<div style="position:absolute;left:1022px;top:445px;width:1px;height:42px;background:#d9d9d9"></div>
<div style="position:absolute;left:1023px;top:445px;width:1px;height:42px;background:#fff"></div>
<div style="position:absolute;left:1250px;top:445px;width:1px;height:42px;background:#d9d9d9"></div>
<div style="position:absolute;left:1251px;top:445px;width:1px;height:42px;background:#fff"></div>
<div style="position:absolute;left:1407px;top:445px;width:1px;height:42px;background:#d9d9d9"></div>
<div style="position:absolute;left:1408px;top:445px;width:1px;height:42px;background:#fff"></div>
<div style="position:absolute;left:145px;top:456.28px;font-size:19.75px;line-height:19.75px;color:#4d4d4d;font-weight:400;white-space:pre;">Выделено: 0 / 10; Зака…</div>
<div style="position:absolute;left:53px;top:497px;width:1490px;height:12px;background:#d9d9d9;border-radius:6px"></div>
<div style="position:absolute;left:53px;top:497px;width:593px;height:12px;background:#9a9a9a;border-radius:6px"></div>
<svg style="position:absolute;left:31px;top:497px;" width="8" height="12" viewBox="0 0 8 12"><path d="M7 1.5 L7 10.5 L1.5 6Z" fill="#c4c4c4"/></svg>
<div style="position:absolute;left:18px;top:527px;width:1542px;height:0;border-top:1px dashed #d0d0d0"></div>
<div class="btn" style="left:18px;top:534px;width:41px;height:34px"></div>
<svg style="position:absolute;left:28px;top:541px;" width="26" height="25" viewBox="28 541 26 25"><path d="M30.6 543.6 L50.6 543.6 L50.6 563.4 L33 563.4 L30.6 561Z" fill="#86b0e0" stroke="#3f6ea8" stroke-width="1"/><rect x="34.8" y="543.6" width="11.8" height="6.6" fill="#fff"/><path d="M36.3 546.2 L45.2 546.2 M36.3 548.3 L45.2 548.3" stroke="#8fb0d6" stroke-width="0.8"/><rect x="34.2" y="554.8" width="12.6" height="8.6" fill="#5b86bf"/><rect x="35.2" y="556" width="10.6" height="7.4" fill="#c5ccc8"/><rect x="36.2" y="557.6" width="2.2" height="5.6" fill="#4b7fc0"/></svg>
<div class="btn" style="left:71px;top:534px;width:41px;height:34px"></div>
<svg style="position:absolute;left:80px;top:540px;" width="26" height="26" viewBox="80 540 26 26"><path d="M97.76 548.16 A7.1 7.1 0 1 0 99.47 556.93" fill="none" stroke="#2aa52a" stroke-width="2.4"/><path d="M102.00 545.20 L95.10 552.40 L102.10 552.40Z" fill="#2aa52a"/></svg>
<div class="btn" style="left:124px;top:534px;width:164px;height:34px"></div>
<svg style="position:absolute;left:134px;top:541px;" width="28" height="23" viewBox="134 541 28 23"><path d="M138.2 549.6 Q140 544 146.2 544 Q152.6 544.2 153.6 551.5 L153.8 552.4 L157.8 552.4 L150.2 561.2 L142.8 552.4 L147.4 552.4 L147.2 551.5 Q146.6 547.6 144.2 547.4 Q141.6 547.3 140.2 550.6Z" fill="#2a73b0"/></svg>
<div style="position:absolute;left:169px;top:543.88px;font-size:19.75px;line-height:19.75px;color:#333;font-weight:400;white-space:pre;">Заполнить</div>
<svg style="position:absolute;left:271px;top:550px;" width="12" height="8" viewBox="271 550 12 8"><path d="M273 552.6 L281 552.6 L277 556.6Z" fill="#333"/></svg>
<div class="btn" style="left:322px;top:534px;width:151px;height:34px"></div>
<div style="position:absolute;left:385px;top:536px;width:2px;height:34px;background:#aaaaaa"></div>
<div style="position:absolute;left:431px;top:536px;width:2px;height:34px;background:#aaaaaa"></div>
<svg style="position:absolute;left:332px;top:541px;" width="26" height="25" viewBox="332 541 26 25"><circle cx="344.9" cy="553" r="10.6" fill="#5cb85c" stroke="#2f9e3f" stroke-width="1"/><path d="M344.9 547 L344.9 559 M338.9 553 L350.9 553" stroke="#fff" stroke-width="2.4"/></svg>
<svg style="position:absolute;left:364px;top:551px;" width="12" height="8" viewBox="364 551 12 8"><path d="M366 553 L374 553 L370 557Z" fill="#333"/></svg>
<svg style="position:absolute;left:394px;top:541px;" width="26" height="25" viewBox="394 541 26 25"><circle cx="406.9" cy="553" r="10.8" fill="#dc2a2a"/><path d="M402.4 548.5 L411.4 557.5 M411.4 548.5 L402.4 557.5" stroke="#fff" stroke-width="2.3"/></svg>
<svg style="position:absolute;left:440px;top:539px;" width="26" height="27" viewBox="440 539 26 27"><path d="M445.4 541.5 L456.8 541.5 L461.6 546.3 L461.6 562.6 L445.4 562.6Z" fill="#fff" stroke="#7e8d9c" stroke-width="1.3"/><path d="M456.6 541.6 L456.6 546.4 L461.5 546.4" fill="#dfe5ea" stroke="#7e8d9c" stroke-width="1"/><circle cx="449.5" cy="557.4" r="6.4" fill="#dc2a2a"/><path d="M446.8 554.7 L452.2 560.1 M452.2 554.7 L446.8 560.1" stroke="#fff" stroke-width="1.7"/></svg>
<div class="btn" style="left:507px;top:534px;width:88px;height:34px"></div>
<div style="position:absolute;left:553px;top:536px;width:2px;height:34px;background:#aaaaaa"></div>
<svg style="position:absolute;left:514px;top:536px;" width="32" height="32" viewBox="514 536 32 32"><rect x="525.5" y="541.5" width="15" height="15.5" rx="2.2" fill="#fff" stroke="#6e8aa0" stroke-width="1.7"/><rect x="522.4000000000001" y="544.4" width="15" height="15.5" rx="2.2" fill="#fff" stroke="#9fb2c2" stroke-width="1.7"/><rect x="520.0" y="548.1999999999999" width="15" height="15.4" rx="2.2" fill="#fff" stroke="#4d6d88" stroke-width="1.8"/><path d="M522.2 555.0 L527.0 559.6 L534.7 549.6999999999999" fill="none" stroke="#0a650a" stroke-width="4.6" stroke-linejoin="miter"/><path d="M522.2 555.0 L527.0 559.6 L534.7 549.6999999999999" fill="none" stroke="#43d11c" stroke-width="2.4" stroke-linejoin="miter"/></svg>
<svg style="position:absolute;left:559px;top:536px;" width="32" height="32" viewBox="559 536 32 32"><rect x="570.4" y="541.5" width="15" height="15.5" rx="2.2" fill="#fff" stroke="#6e8aa0" stroke-width="1.7"/><rect x="567.3000000000001" y="544.4" width="15" height="15.5" rx="2.2" fill="#fff" stroke="#9fb2c2" stroke-width="1.7"/><rect x="564.9" y="548.1999999999999" width="15" height="15.4" rx="2.2" fill="#fff" stroke="#4d6d88" stroke-width="1.8"/></svg>
<div class="btn" style="left:629px;top:534px;width:107px;height:34px"></div>
<div style="position:absolute;left:675px;top:536px;width:2px;height:34px;background:#aaaaaa"></div>
<svg style="position:absolute;left:636px;top:538px;" width="32" height="28" viewBox="636 538 32 28"><g transform="translate(641.6 542.2) scale(0.88 1.04) translate(-810 -91.2)"><path d="M810 94.3 L817 91.2 L817 109 L810 112.2Z" fill="#5f82a6"/><path d="M817 91.2 L823.4 94.6 L823.4 104 L830.2 101.6 L830.2 91.4 L823.4 94.6" fill="#5f82a6"/><path d="M817.2 91.6 L823.2 94.8 M817.2 108.8 L822.4 111.6" stroke="#5f82a6" stroke-width="1.2"/></g><path d="M653.4 557.2 L656.6 560.6 L662.8 554.2" fill="none" stroke="#1fc21f" stroke-width="2.8" stroke-linecap="round" stroke-linejoin="round"/></svg>
<div style="position:absolute;left:18px;top:588px;width:1540px;height:316px;border:1px solid #a8a8a8;background:#fff"></div>
<div style="position:absolute;left:19px;top:589px;width:1540px;height:43px;background:#f2f2f2"></div>
<div style="position:absolute;left:19px;top:632px;width:1540px;height:1px;background:#cfcfcf"></div>
<div style="position:absolute;left:69px;top:589px;width:1px;height:43px;background:#d9d9d9"></div>
<div style="position:absolute;left:70px;top:589px;width:1px;height:43px;background:#fff"></div>
<div style="position:absolute;left:124px;top:589px;width:1px;height:43px;background:#d9d9d9"></div>
<div style="position:absolute;left:125px;top:589px;width:1px;height:43px;background:#fff"></div>
<div style="position:absolute;left:353px;top:589px;width:1px;height:43px;background:#d9d9d9"></div>
<div style="position:absolute;left:354px;top:589px;width:1px;height:43px;background:#fff"></div>
<div style="position:absolute;left:503px;top:589px;width:1px;height:43px;background:#d9d9d9"></div>
<div style="position:absolute;left:504px;top:589px;width:1px;height:43px;background:#fff"></div>
<div style="position:absolute;left:618px;top:589px;width:1px;height:43px;background:#d9d9d9"></div>
<div style="position:absolute;left:619px;top:589px;width:1px;height:43px;background:#fff"></div>
<div style="position:absolute;left:137px;top:601.28px;font-size:19.75px;line-height:19.75px;color:#4d4d4d;font-weight:400;white-space:pre;">Транспорт</div>
<div style="position:absolute;left:366px;top:601.28px;font-size:19.75px;line-height:19.75px;color:#4d4d4d;font-weight:400;white-space:pre;">Маршрутн…</div>
<div style="position:absolute;left:516px;top:601.28px;font-size:19.75px;line-height:19.75px;color:#4d4d4d;font-weight:400;white-space:pre;">Вес, кг</div>
<div style="position:absolute;left:631px;top:601.28px;font-size:19.75px;line-height:19.75px;color:#4d4d4d;font-weight:400;white-space:pre;">Вес (кг)</div>
<svg style="position:absolute;left:80px;top:595px;" width="25" height="27" viewBox="80 595 25 27"><path d="M92.6 597.8 L92.6 605.4" stroke="#a9bccc" stroke-width="1.2"/><path d="M92.6 600.8 Q93.19999999999999 600.8 93.69999999999999 601.3 L99.69999999999999 607.3 Q100.19999999999999 607.9 99.69999999999999 608.5 L93.69999999999999 615.3 Q92.6 616.4 91.5 615.3 L85.5 609.0 Q85.0 608.4 85.5 607.8 L91.5 601.3 Q92.0 600.8 92.6 600.8Z" fill="#0b3d64"/><circle cx="92.6" cy="605.6" r="2.4" fill="#fff"/><path d="M92.6 597.8 L92.6 605.6" stroke="#b9c9d6" stroke-width="1"/><path d="M98.8 605.8 Q102.8 607.0 102.6 610.8 L102.0 614.1999999999999 L100.6 614.8 L101.19999999999999 609.6Z" fill="#e00000"/><rect x="85.0" y="617.8" width="18.1" height="3.2" fill="#d40000"/></svg>
<div style="position:absolute;left:19px;top:633px;width:1540px;height:41px;background:#fff"></div>
<div style="position:absolute;left:19px;top:674px;width:1540px;height:1px;background:#e6e6e6"></div>
<div style="position:absolute;left:33px;top:642px;width:19px;height:19px;border:1px solid #999;border-radius:2px;background:#fff"></div>
<svg style="position:absolute;left:30px;top:636px;" width="30" height="32" viewBox="30 636 30 32"><path d="M37.8 651.1 L42.9 657.4 L54.4 641.9" fill="none" stroke="#0a9a46" stroke-width="3.3" stroke-linecap="round" stroke-linejoin="round"/></svg>
<div style="position:absolute;left:83px;top:643px;width:21px;height:21px;border-radius:50%;background:#b620f0"></div>
<svg style="position:absolute;left:135px;top:643px;" width="29" height="25" viewBox="135 643 29 25"><defs><linearGradient id="tg645" x1="0" y1="0" x2="0" y2="1"><stop offset="0" stop-color="#4a9a78"/><stop offset="1" stop-color="#147536"/></linearGradient></defs><path d="M137 645 L150.4 645 L150.4 648.1 L153.5 648.1 L159.3 654.1 L159.3 655.6 L160.8 656.5 L160.8 659.6 L159 661.3 L137 661.3Z" fill="url(#tg645)"/><circle cx="142.3" cy="662.4" r="3.6" fill="#fff" opacity="0.45"/><circle cx="154.3" cy="662.4" r="3.6" fill="#fff" opacity="0.45"/><circle cx="142.3" cy="662.4" r="2.3" fill="#1f7d45"/><circle cx="154.3" cy="662.4" r="2.3" fill="#1f7d45"/><rect x="140.1" y="648.7" width="8.9" height="1.3" fill="#e2efe6"/><rect x="140.1" y="651.6" width="8.9" height="1.3" fill="#e2efe6"/><path d="M151.8 649.6 L151.8 654.3 L156 654.3Z" fill="#e2efe6"/></svg>
<div style="position:absolute;left:173px;top:645.28px;font-size:19.75px;line-height:19.75px;color:#222;font-weight:400;white-space:pre;">ф 382 вм 777</div>
<div style="position:absolute;left:366px;top:645.28px;font-size:19.75px;line-height:19.75px;color:#222;font-weight:400;white-space:pre;">Новый мар…</div>
<div style="position:absolute;right:979px;top:643.61px;font-size:17px;line-height:17px;color:#0b6b0b;font-weight:700;white-space:pre;text-align:right;letter-spacing:0.55px">200 / 6 000</div>
<div style="position:absolute;left:19px;top:675px;width:1540px;height:41px;background:#fff"></div>
<div style="position:absolute;left:19px;top:716px;width:1540px;height:1px;background:#e6e6e6"></div>
<div style="position:absolute;left:33px;top:684px;width:19px;height:19px;border:1px solid #999;border-radius:2px;background:#fff"></div>
<svg style="position:absolute;left:30px;top:678px;" width="30" height="32" viewBox="30 678 30 32"><path d="M37.8 693.1 L42.9 699.4 L54.4 683.9" fill="none" stroke="#0a9a46" stroke-width="3.3" stroke-linecap="round" stroke-linejoin="round"/></svg>
<div style="position:absolute;left:83px;top:685px;width:21px;height:21px;border-radius:50%;background:#f075cf"></div>
<svg style="position:absolute;left:135px;top:685px;" width="29" height="25" viewBox="135 685 29 25"><defs><linearGradient id="tg687" x1="0" y1="0" x2="0" y2="1"><stop offset="0" stop-color="#4a9a78"/><stop offset="1" stop-color="#147536"/></linearGradient></defs><path d="M137 687 L150.4 687 L150.4 690.1 L153.5 690.1 L159.3 696.1 L159.3 697.6 L160.8 698.5 L160.8 701.6 L159 703.3 L137 703.3Z" fill="url(#tg687)"/><circle cx="142.3" cy="704.4" r="3.6" fill="#fff" opacity="0.45"/><circle cx="154.3" cy="704.4" r="3.6" fill="#fff" opacity="0.45"/><circle cx="142.3" cy="704.4" r="2.3" fill="#1f7d45"/><circle cx="154.3" cy="704.4" r="2.3" fill="#1f7d45"/><rect x="140.1" y="690.7" width="8.9" height="1.3" fill="#e2efe6"/><rect x="140.1" y="693.6" width="8.9" height="1.3" fill="#e2efe6"/><path d="M151.8 691.6 L151.8 696.3 L156 696.3Z" fill="#e2efe6"/></svg>
<div style="position:absolute;left:173px;top:687.28px;font-size:19.75px;line-height:19.75px;color:#222;font-weight:400;white-space:pre;">у 197 пе 777</div>
<div style="position:absolute;left:366px;top:687.28px;font-size:19.75px;line-height:19.75px;color:#222;font-weight:400;white-space:pre;">Новый мар…</div>
<div style="position:absolute;right:979px;top:685.61px;font-size:17px;line-height:17px;color:#0b6b0b;font-weight:700;white-space:pre;text-align:right;letter-spacing:0.55px">50 / 6 000</div>
<div style="position:absolute;left:19px;top:717px;width:1540px;height:41px;background:#fdf1c6"></div>
<div style="position:absolute;left:19px;top:758px;width:1540px;height:1px;background:#e6e6e6"></div>
<div style="position:absolute;left:69px;top:717px;width:1px;height:41px;background:#fff"></div>
<div style="position:absolute;left:124px;top:717px;width:1px;height:41px;background:#fff"></div>
<div style="position:absolute;left:353px;top:717px;width:1px;height:41px;background:#fff"></div>
<div style="position:absolute;left:503px;top:717px;width:1px;height:41px;background:#fff"></div>
<div style="position:absolute;left:618px;top:717px;width:1px;height:41px;background:#fff"></div>
<div style="position:absolute;left:125px;top:718px;width:222px;height:33px;border:3px solid #f8c81c;background:#fde48f"></div>
<div style="position:absolute;left:33px;top:726px;width:19px;height:19px;border:1px solid #999;border-radius:2px;background:#fff"></div>
<svg style="position:absolute;left:30px;top:720px;" width="30" height="32" viewBox="30 720 30 32"><path d="M37.8 735.1 L42.9 741.4 L54.4 725.9" fill="none" stroke="#0a9a46" stroke-width="3.3" stroke-linecap="round" stroke-linejoin="round"/></svg>
<div style="position:absolute;left:83px;top:727px;width:21px;height:21px;border-radius:50%;background:#1e9bff"></div>
<svg style="position:absolute;left:135px;top:727px;" width="29" height="25" viewBox="135 727 29 25"><defs><linearGradient id="tg729" x1="0" y1="0" x2="0" y2="1"><stop offset="0" stop-color="#4a9a78"/><stop offset="1" stop-color="#147536"/></linearGradient></defs><path d="M137 729 L150.4 729 L150.4 732.1 L153.5 732.1 L159.3 738.1 L159.3 739.6 L160.8 740.5 L160.8 743.6 L159 745.3 L137 745.3Z" fill="url(#tg729)"/><circle cx="142.3" cy="746.4" r="3.6" fill="#fff" opacity="0.45"/><circle cx="154.3" cy="746.4" r="3.6" fill="#fff" opacity="0.45"/><circle cx="142.3" cy="746.4" r="2.3" fill="#1f7d45"/><circle cx="154.3" cy="746.4" r="2.3" fill="#1f7d45"/><rect x="140.1" y="732.7" width="8.9" height="1.3" fill="#e2efe6"/><rect x="140.1" y="735.6" width="8.9" height="1.3" fill="#e2efe6"/><path d="M151.8 733.6 L151.8 738.3 L156 738.3Z" fill="#e2efe6"/></svg>
<div style="position:absolute;left:173px;top:729.28px;font-size:19.75px;line-height:19.75px;color:#222;font-weight:400;white-space:pre;">а447рс799</div>
<div style="position:absolute;left:366px;top:729.28px;font-size:19.75px;line-height:19.75px;color:#222;font-weight:400;white-space:pre;">Новый мар…</div>
<div style="position:absolute;right:993px;top:727.61px;font-size:17px;line-height:17px;color:#d4102a;font-weight:700;white-space:pre;text-align:right;letter-spacing:0.55px">8 000 / 6</div>
<div style="position:absolute;left:600px;top:739px;width:6px;height:2px;background:#d4102a"></div>
<div style="position:absolute;left:19px;top:759px;width:1540px;height:41px;background:#fff"></div>
<div style="position:absolute;left:19px;top:800px;width:1540px;height:1px;background:#e6e6e6"></div>
<svg style="position:absolute;left:135px;top:769px;" width="29" height="25" viewBox="135 769 29 25"><defs><linearGradient id="tg771" x1="0" y1="0" x2="0" y2="1"><stop offset="0" stop-color="#4a9a78"/><stop offset="1" stop-color="#147536"/></linearGradient></defs><path d="M137 771 L150.4 771 L150.4 774.1 L153.5 774.1 L159.3 780.1 L159.3 781.6 L160.8 782.5 L160.8 785.6 L159 787.3 L137 787.3Z" fill="url(#tg771)"/><circle cx="142.3" cy="788.4" r="3.6" fill="#fff" opacity="0.45"/><circle cx="154.3" cy="788.4" r="3.6" fill="#fff" opacity="0.45"/><circle cx="142.3" cy="788.4" r="2.3" fill="#1f7d45"/><circle cx="154.3" cy="788.4" r="2.3" fill="#1f7d45"/><rect x="140.1" y="774.7" width="8.9" height="1.3" fill="#e2efe6"/><rect x="140.1" y="777.6" width="8.9" height="1.3" fill="#e2efe6"/><path d="M151.8 775.6 L151.8 780.3 L156 780.3Z" fill="#e2efe6"/></svg>
<div style="position:absolute;left:173px;top:771.28px;font-size:19.75px;line-height:19.75px;color:#222;font-weight:400;white-space:pre;">А 125 КУ 77</div>
<div style="position:absolute;right:979px;top:769.61px;font-size:17px;line-height:17px;color:#0b6b0b;font-weight:700;white-space:pre;text-align:right;letter-spacing:0.55px">0 / 6 000</div>
<div style="position:absolute;left:19px;top:801px;width:1540px;height:41px;background:#fff"></div>
<div style="position:absolute;left:19px;top:842px;width:1540px;height:1px;background:#e6e6e6"></div>
<svg style="position:absolute;left:135px;top:811px;" width="29" height="25" viewBox="135 811 29 25"><defs><linearGradient id="tg813" x1="0" y1="0" x2="0" y2="1"><stop offset="0" stop-color="#4a9a78"/><stop offset="1" stop-color="#147536"/></linearGradient></defs><path d="M137 813 L150.4 813 L150.4 816.1 L153.5 816.1 L159.3 822.1 L159.3 823.6 L160.8 824.5 L160.8 827.6 L159 829.3 L137 829.3Z" fill="url(#tg813)"/><circle cx="142.3" cy="830.4" r="3.6" fill="#fff" opacity="0.45"/><circle cx="154.3" cy="830.4" r="3.6" fill="#fff" opacity="0.45"/><circle cx="142.3" cy="830.4" r="2.3" fill="#1f7d45"/><circle cx="154.3" cy="830.4" r="2.3" fill="#1f7d45"/><rect x="140.1" y="816.7" width="8.9" height="1.3" fill="#e2efe6"/><rect x="140.1" y="819.6" width="8.9" height="1.3" fill="#e2efe6"/><path d="M151.8 817.6 L151.8 822.3 L156 822.3Z" fill="#e2efe6"/></svg>
<div style="position:absolute;left:173px;top:813.28px;font-size:19.75px;line-height:19.75px;color:#222;font-weight:400;white-space:pre;">А 973 УА 77</div>
<div style="position:absolute;right:979px;top:811.61px;font-size:17px;line-height:17px;color:#0b6b0b;font-weight:700;white-space:pre;text-align:right;letter-spacing:0.55px">0 / 6 000</div>
<div style="position:absolute;left:19px;top:840px;width:1540px;height:1px;background:#cfcfcf"></div>
<div style="position:absolute;left:19px;top:841px;width:1540px;height:42px;background:#f2f2f2"></div>
<div style="position:absolute;left:69px;top:841px;width:1px;height:42px;background:#d9d9d9"></div>
<div style="position:absolute;left:70px;top:841px;width:1px;height:42px;background:#fff"></div>
<div style="position:absolute;left:124px;top:841px;width:1px;height:42px;background:#d9d9d9"></div>
<div style="position:absolute;left:125px;top:841px;width:1px;height:42px;background:#fff"></div>
<div style="position:absolute;left:353px;top:841px;width:1px;height:42px;background:#d9d9d9"></div>
<div style="position:absolute;left:354px;top:841px;width:1px;height:42px;background:#fff"></div>
<div style="position:absolute;left:503px;top:841px;width:1px;height:42px;background:#d9d9d9"></div>
<div style="position:absolute;left:504px;top:841px;width:1px;height:42px;background:#fff"></div>
<div style="position:absolute;left:618px;top:841px;width:1px;height:42px;background:#d9d9d9"></div>
<div style="position:absolute;left:619px;top:841px;width:1px;height:42px;background:#fff"></div>
<div style="position:absolute;left:137px;top:853.28px;font-size:19.75px;line-height:19.75px;color:#4d4d4d;font-weight:400;white-space:pre;">Задействовано ТС: …</div>
<div style="position:absolute;right:1095px;top:853.28px;font-size:19.75px;line-height:19.75px;color:#4d4d4d;font-weight:400;white-space:pre;text-align:right;">6</div>
<div style="position:absolute;left:518px;top:853.28px;font-size:19.75px;line-height:19.75px;color:#4d4d4d;font-weight:400;white-space:pre;">9 560 / …</div>
<div style="position:absolute;left:53px;top:888px;width:1490px;height:12px;background:#d9d9d9;border-radius:6px"></div>
<div style="position:absolute;left:53px;top:888px;width:349px;height:12px;background:#9a9a9a;border-radius:6px"></div>
<svg style="position:absolute;left:31px;top:888px;" width="8" height="12" viewBox="0 0 8 12"><path d="M7 1.5 L7 10.5 L1.5 6Z" fill="#c4c4c4"/></svg>
<div style="position:absolute;left:678px;top:265px;width:903px;height:648px;border:1px solid #a3a3a3;background:#fff;box-shadow:0 0 9px 2px rgba(0,0,0,0.16)"></div>
<svg style="position:absolute;left:698px;top:280px;" width="34" height="32" viewBox="698 280 34 32"><path d="M714.45 284.50 L718.45 293.17 L727.34 293.17 L720.16 299.29 L723.08 307.96 L714.45 302.50 L705.75 307.96 L708.74 299.29 L701.64 293.17 L710.30 293.17Z" fill="none" stroke="#b0b6be" stroke-width="1.2" stroke-linejoin="round"/></svg>
<div style="position:absolute;left:743px;top:283.62px;font-size:28.8px;line-height:28.8px;color:#000;font-weight:400;white-space:pre;">Планировщик - Демонстрационна…</div>
<svg style="position:absolute;left:1261px;top:285px;" width="25" height="25" viewBox="0 0 25 25"><g fill="none" stroke="#aaa" stroke-width="1.8"><rect x="2" y="2.5" width="21" height="20" rx="2.5"/><path d="M6.5 3 L6.5 10 L18.5 10 L18.5 3"/></g><path d="M9 6 L16 6 M9 8 L16 8" stroke="#aaa" stroke-width="1"/><rect x="6.5" y="16" width="12" height="6" fill="#aaa"/><rect x="8.5" y="17.5" width="2.5" height="3" fill="#fff"/></svg>
<svg style="position:absolute;left:1307px;top:284px;" width="27" height="26" viewBox="0 0 27 26"><g fill="none" stroke="#333" stroke-width="1.8"><path d="M6.5 6.5 L6.5 2 L20.5 2 L20.5 6.5"/><path d="M6 18.5 L3.5 18.5 Q1.5 18.5 1.5 16.5 L1.5 8.5 Q1.5 6.5 3.5 6.5 L23.5 6.5 Q25.5 6.5 25.5 8.5 L25.5 16.5 Q25.5 18.5 23.5 18.5 L21 18.5"/><rect x="6" y="12" width="15" height="12"/></g><path d="M14 8.8 L17 8.8 M19 8.8 L22 8.8" stroke="#333" stroke-width="1.3"/><path d="M8.5 16 L17 16 M8.5 19 L12 19" stroke="#333" stroke-width="1.3"/></svg>
<svg style="position:absolute;left:1354px;top:284px;" width="26" height="26" viewBox="0 0 26 26"><g fill="none" stroke="#333" stroke-width="1.8"><path d="M11 22.5 L4 22.5 Q2.5 22.5 2.5 21 L2.5 3.5 Q2.5 2 4 2 L20 2 Q21.5 2 21.5 3.5 L21.5 6"/><circle cx="14.5" cy="14" r="5"/></g><path d="M18 17.5 L22.5 22" stroke="#333" stroke-width="3"/></svg>
<svg style="position:absolute;left:1396px;top:278px;" width="36" height="36" viewBox="1396 278 36 36"><g transform="translate(-44.2 267.8)" fill="none" stroke="#555" stroke-width="1.9" stroke-linecap="round"><path d="M1455.8 20.8 L1458.8 17.8 A4.8 4.8 0 0 1 1465.6 24.6 L1463 27.2"/><path d="M1451 25.8 L1448.4 28.4 A4.8 4.8 0 0 0 1455.2 35.2 L1457.8 32.6"/><path d="M1453.9 30.1 L1460.1 23.7"/></g></svg>
<svg style="position:absolute;left:1454px;top:284px;" width="13" height="22" viewBox="0 0 13 22"><g fill="#777"><circle cx="6.5" cy="5.7" r="2.4"/><circle cx="6.5" cy="12.3" r="2.4"/><circle cx="6.5" cy="18.5" r="2.4"/></g></svg>
<svg style="position:absolute;left:1497px;top:287px;" width="19" height="19" viewBox="0 0 19 19"><rect x="4" y="4" width="11.5" height="11" fill="none" stroke="#222" stroke-width="2"/></svg>
<svg style="position:absolute;left:1542px;top:286px;" width="20" height="20" viewBox="0 0 20 20"><path d="M3 3 L17 17 M17 3 L3 17" stroke="#333" stroke-width="1.5"/></svg>
<div style="position:absolute;left:697px;top:331.28px;font-size:19.75px;line-height:19.75px;color:#4d4d4d;font-weight:400;white-space:pre;">Дней:</div>
<div style="position:absolute;left:819px;top:331.28px;font-size:19.75px;line-height:19.75px;color:#4d4d4d;font-weight:400;white-space:pre;">Часов:</div>
<div class="fld" style="left:697px;top:357px;width:105px;height:33px"></div>
<div style="position:absolute;left:772px;top:358px;width:1px;height:33px;background:#bdbdbd"></div>
<div style="position:absolute;left:772px;top:374px;width:31px;height:1px;background:#bdbdbd"></div>
<div style="position:absolute;right:817px;top:365.28px;font-size:19.75px;line-height:19.75px;color:#333;font-weight:400;white-space:pre;text-align:right;">7</div>
<svg style="position:absolute;left:783.6px;top:364.8px;" width="8.0" height="6.0" viewBox="783.6 364.8 8.0 6.0"><path d="M787.6 366.3 L790.1 369.2 L785.1 369.2Z" fill="#333"/></svg>
<svg style="position:absolute;left:783.6px;top:379.5px;" width="8.0" height="6.0" viewBox="783.6 379.5 8.0 6.0"><path d="M785.1 381.1 L790.1 381.1 L787.6 384.0Z" fill="#333"/></svg>
<div class="fld" style="left:819px;top:357px;width:90px;height:33px"></div>
<div style="position:absolute;left:879px;top:358px;width:1px;height:33px;background:#bdbdbd"></div>
<div style="position:absolute;left:824px;top:365.28px;font-size:19.75px;line-height:19.75px;color:#333;font-weight:400;white-space:pre;">24</div>
<svg style="position:absolute;left:888px;top:370px;" width="12" height="8" viewBox="888 370 12 8"><path d="M890.5 372 L898.5 372 L894.5 376Z" fill="#333"/></svg>
<div class="btn" style="left:926px;top:354px;width:84px;height:34px"></div>
<div style="position:absolute;left:948px;top:362.78px;font-size:19.75px;line-height:19.75px;color:#333;font-weight:400;white-space:pre;">Факт</div>
<div class="btn" style="left:1044px;top:354px;width:134px;height:34px"></div>
<div style="position:absolute;left:1090px;top:356px;width:2px;height:34px;background:#aaaaaa"></div>
<div style="position:absolute;left:1136px;top:356px;width:2px;height:34px;background:#aaaaaa"></div>
<svg style="position:absolute;left:1056px;top:361px;" width="22" height="23" viewBox="0 0 22 23"><path d="M2.5 11.5 L11.5 1.5 L11.5 7 L18.5 7 L18.5 16 L11.5 16 L11.5 21.5Z" fill="#4aaee8" stroke="#1d6da3" stroke-width="1.1" stroke-linejoin="round"/></svg>
<svg style="position:absolute;left:1148px;top:361px;" width="22" height="23" viewBox="0 0 22 23"><path d="M19.5 11.5 L10.5 1.5 L10.5 7 L3.5 7 L3.5 16 L10.5 16 L10.5 21.5Z" fill="#4aaee8" stroke="#1d6da3" stroke-width="1.1" stroke-linejoin="round"/></svg>
<svg style="position:absolute;left:1100px;top:360px;" width="24" height="25" viewBox="0 0 24 25"><rect x="1.5" y="2" width="21" height="21.5" rx="2" fill="#fff" stroke="#8e93b8" stroke-width="1.4"/><rect x="1" y="1.5" width="22" height="5" rx="1.5" fill="#c5b768"/><path d="M5 11 L12 11 M5 14 L12 14 M5 17 L12 17 M5 20 L12 20" stroke="#b5b8cc" stroke-width="1.3"/><rect x="13.5" y="9" width="7" height="7" fill="#e01818"/><rect x="15.5" y="11" width="3" height="3" fill="#cfe0b0"/></svg>
<div class="btn" style="left:1357px;top:354px;width:86px;height:34px"></div>
<div style="position:absolute;left:1379px;top:363.28px;font-size:19.75px;line-height:19.75px;color:#333;font-weight:400;white-space:pre;">Еще</div>
<svg style="position:absolute;left:1426px;top:370px;" width="12" height="8" viewBox="1426 370 12 8"><path d="M1428 372.5 L1436 372.5 L1432 376.5Z" fill="#333"/></svg>
<div class="btn" style="left:1462px;top:354px;width:88px;height:34px"></div>
<div style="position:absolute;left:1508px;top:356px;width:2px;height:34px;background:#aaaaaa"></div>
<svg style="position:absolute;left:1470px;top:358px;" width="30" height="29" viewBox="1470 358 30 29"><g transform="translate(40 270)"><rect x="1433.6" y="92.6" width="21.6" height="19.2" rx="1.8" fill="#fff" stroke="#64809f" stroke-width="1.5"/><path d="M1433.6 96.6 L1455.2 96.6" stroke="#64809f" stroke-width="1.3"/><path d="M1433.6 93.6 L1455.2 93.6" stroke="#64809f" stroke-width="1.6"/><path d="M1439.6 93 L1439.6 111.8" stroke="#8ea3bd" stroke-width="1.1"/><path d="M1447.3 93 L1447.3 95.5" stroke="#64809f" stroke-width="1.1"/><path d="M1440 97.6 L1455 97.6" stroke="#c9d4e2" stroke-width="1"/><g fill="#5f73a0"><rect x="1436" y="101.8" width="1.5" height="1.5"/><rect x="1436" y="104.8" width="1.5" height="1.5"/><rect x="1436" y="107.8" width="1.5" height="1.5"/></g><path d="M1454.36 104.14 L1456.47 104.42 L1456.47 107.38 L1454.36 107.66 L1453.74 109.15 L1455.04 110.85 L1452.95 112.94 L1451.25 111.64 L1449.76 112.26 L1449.48 114.37 L1446.52 114.37 L1446.24 112.26 L1444.75 111.64 L1443.05 112.94 L1440.96 110.85 L1442.26 109.15 L1441.64 107.66 L1439.53 107.38 L1439.53 104.42 L1441.64 104.14 L1442.26 102.65 L1440.96 100.95 L1443.05 98.86 L1444.75 100.16 L1446.24 99.54 L1446.52 97.43 L1449.48 97.43 L1449.76 99.54 L1451.25 100.16 L1452.95 98.86 L1455.04 100.95 L1453.74 102.65Z" fill="#f0f0f0" stroke="#535b66" stroke-width="1.5" stroke-linejoin="round"/><circle cx="1448" cy="105.9" r="2.4" fill="#fff" stroke="#535b66" stroke-width="1.5"/></g></svg>
<svg style="position:absolute;left:1516px;top:358px;" width="30" height="29" viewBox="1516 358 30 29"><g transform="translate(40 270)"><rect x="1479.9" y="93.8" width="20.6" height="19.4" rx="2.5" fill="#ececec" stroke="#6e7e8c" stroke-width="1.8"/><path d="M1479 98.5 L1479 95.5 Q1479 93 1482 93 L1498.5 93 Q1501.4 93 1501.4 95.5 L1501.4 98.5Z" fill="#3d8fdc"/><path d="M1495.89 101.63 L1497.69 101.89 L1497.69 104.51 L1495.89 104.77 L1495.33 106.11 L1496.42 107.57 L1494.57 109.42 L1493.11 108.33 L1491.77 108.89 L1491.51 110.69 L1488.89 110.69 L1488.63 108.89 L1487.29 108.33 L1485.83 109.42 L1483.98 107.57 L1485.07 106.11 L1484.51 104.77 L1482.71 104.51 L1482.71 101.89 L1484.51 101.63 L1485.07 100.29 L1483.98 98.83 L1485.83 96.98 L1487.29 98.07 L1488.63 97.51 L1488.89 95.71 L1491.51 95.71 L1491.77 97.51 L1493.11 98.07 L1494.57 96.98 L1496.42 98.83 L1495.33 100.29Z" fill="#eeeeee" stroke="#5d6670" stroke-width="1.4" stroke-linejoin="round"/><circle cx="1490.2" cy="103.2" r="2.1" fill="#fff" stroke="#5d6670" stroke-width="1.4"/></g></svg>
<div style="position:absolute;left:694px;top:405px;width:861px;height:492px;border:1px solid #f5c518"></div>
<div style="position:absolute;left:697px;top:408px;width:857px;height:1px;background:#a8a8a8"></div>
<div style="position:absolute;left:697px;top:408px;width:1px;height:488px;background:#a8a8a8"></div>
<div style="position:absolute;left:708px;top:410.78px;font-size:19.75px;line-height:19.75px;color:#5a5040;font-weight:400;white-space:pre;letter-spacing:1px">ТС</div>
<div style="position:absolute;left:698px;top:409px;width:838px;height:469px;overflow:hidden">
<div style="position:absolute;left:298px;top:1.78px;font-size:19.75px;line-height:19.75px;color:#5a5040;font-weight:400;white-space:pre;letter-spacing:-0.8px">01.06.2021</div>
<div style="position:absolute;left:415px;top:1.78px;font-size:19.75px;line-height:19.75px;color:#5a5040;font-weight:400;white-space:pre;letter-spacing:-0.8px">02.06.2021</div>
<div style="position:absolute;left:532px;top:1.78px;font-size:19.75px;line-height:19.75px;color:#5a5040;font-weight:400;white-space:pre;letter-spacing:-0.8px">03.06.2021</div>
<div style="position:absolute;left:649px;top:1.78px;font-size:19.75px;line-height:19.75px;color:#5a5040;font-weight:400;white-space:pre;letter-spacing:-0.8px">04.06.2021</div>
<div style="position:absolute;left:765px;top:1.78px;font-size:19.75px;line-height:19.75px;color:#5a5040;font-weight:400;white-space:pre;letter-spacing:-0.8px">05.06.2021</div>
</div>
<div style="position:absolute;left:698px;top:434px;width:838px;height:33px;background:#f9f8e1"></div>
<div style="position:absolute;left:698px;top:433px;width:838px;height:1px;background:#e0e0e0"></div>
<div style="position:absolute;left:698px;top:467px;width:838px;height:1px;background:#e0e0e0"></div>
<div style="position:absolute;left:698px;top:501px;width:838px;height:1px;background:#e0e0e0"></div>
<div style="position:absolute;left:698px;top:536px;width:838px;height:1px;background:#e0e0e0"></div>
<div style="position:absolute;left:698px;top:584px;width:838px;height:1px;background:#e0e0e0"></div>
<div style="position:absolute;left:698px;top:618px;width:838px;height:1px;background:#e0e0e0"></div>
<div style="position:absolute;left:698px;top:651px;width:838px;height:1px;background:#e0e0e0"></div>
<div style="position:absolute;left:698px;top:684px;width:838px;height:1px;background:#e0e0e0"></div>
<div style="position:absolute;left:698px;top:719px;width:838px;height:1px;background:#e0e0e0"></div>
<div style="position:absolute;left:698px;top:752px;width:838px;height:1px;background:#e0e0e0"></div>
<div style="position:absolute;left:698px;top:786px;width:838px;height:1px;background:#e0e0e0"></div>
<div style="position:absolute;left:698px;top:821px;width:838px;height:1px;background:#e0e0e0"></div>
<div style="position:absolute;left:698px;top:855px;width:838px;height:1px;background:#e0e0e0"></div>
<div style="position:absolute;left:992px;top:409px;width:1px;height:469px;background:#e0e0e0"></div>
<div style="position:absolute;left:1109px;top:434px;width:1px;height:1px;background:#9a9a9a"></div>
<div style="position:absolute;left:1226px;top:434px;width:1px;height:1px;background:#9a9a9a"></div>
<div style="position:absolute;left:1343px;top:434px;width:1px;height:1px;background:#9a9a9a"></div>
<div style="position:absolute;left:1459px;top:434px;width:1px;height:1px;background:#9a9a9a"></div>
<div style="position:absolute;left:1109px;top:468px;width:1px;height:1px;background:#9a9a9a"></div>
<div style="position:absolute;left:1226px;top:468px;width:1px;height:1px;background:#9a9a9a"></div>
<div style="position:absolute;left:1343px;top:468px;width:1px;height:1px;background:#9a9a9a"></div>
<div style="position:absolute;left:1459px;top:468px;width:1px;height:1px;background:#9a9a9a"></div>
<div style="position:absolute;left:1109px;top:502px;width:1px;height:1px;background:#9a9a9a"></div>
<div style="position:absolute;left:1226px;top:502px;width:1px;height:1px;background:#9a9a9a"></div>
<div style="position:absolute;left:1343px;top:502px;width:1px;height:1px;background:#9a9a9a"></div>
<div style="position:absolute;left:1459px;top:502px;width:1px;height:1px;background:#9a9a9a"></div>
<div style="position:absolute;left:1109px;top:537px;width:1px;height:1px;background:#9a9a9a"></div>
<div style="position:absolute;left:1226px;top:537px;width:1px;height:1px;background:#9a9a9a"></div>
<div style="position:absolute;left:1343px;top:537px;width:1px;height:1px;background:#9a9a9a"></div>
<div style="position:absolute;left:1459px;top:537px;width:1px;height:1px;background:#9a9a9a"></div>
<div style="position:absolute;left:1109px;top:585px;width:1px;height:1px;background:#9a9a9a"></div>
<div style="position:absolute;left:1226px;top:585px;width:1px;height:1px;background:#9a9a9a"></div>
<div style="position:absolute;left:1343px;top:585px;width:1px;height:1px;background:#9a9a9a"></div>
<div style="position:absolute;left:1459px;top:585px;width:1px;height:1px;background:#9a9a9a"></div>
<div style="position:absolute;left:1109px;top:619px;width:1px;height:1px;background:#9a9a9a"></div>
<div style="position:absolute;left:1226px;top:619px;width:1px;height:1px;background:#9a9a9a"></div>
<div style="position:absolute;left:1343px;top:619px;width:1px;height:1px;background:#9a9a9a"></div>
<div style="position:absolute;left:1459px;top:619px;width:1px;height:1px;background:#9a9a9a"></div>
<div style="position:absolute;left:1109px;top:652px;width:1px;height:1px;background:#9a9a9a"></div>
<div style="position:absolute;left:1226px;top:652px;width:1px;height:1px;background:#9a9a9a"></div>
<div style="position:absolute;left:1343px;top:652px;width:1px;height:1px;background:#9a9a9a"></div>
<div style="position:absolute;left:1459px;top:652px;width:1px;height:1px;background:#9a9a9a"></div>
<div style="position:absolute;left:1109px;top:685px;width:1px;height:1px;background:#9a9a9a"></div>
<div style="position:absolute;left:1226px;top:685px;width:1px;height:1px;background:#9a9a9a"></div>
<div style="position:absolute;left:1343px;top:685px;width:1px;height:1px;background:#9a9a9a"></div>
<div style="position:absolute;left:1459px;top:685px;width:1px;height:1px;background:#9a9a9a"></div>
<div style="position:absolute;left:1109px;top:720px;width:1px;height:1px;background:#9a9a9a"></div>
<div style="position:absolute;left:1226px;top:720px;width:1px;height:1px;background:#9a9a9a"></div>
<div style="position:absolute;left:1343px;top:720px;width:1px;height:1px;background:#9a9a9a"></div>
<div style="position:absolute;left:1459px;top:720px;width:1px;height:1px;background:#9a9a9a"></div>
<div style="position:absolute;left:1109px;top:753px;width:1px;height:1px;background:#9a9a9a"></div>
<div style="position:absolute;left:1226px;top:753px;width:1px;height:1px;background:#9a9a9a"></div>
<div style="position:absolute;left:1343px;top:753px;width:1px;height:1px;background:#9a9a9a"></div>
<div style="position:absolute;left:1459px;top:753px;width:1px;height:1px;background:#9a9a9a"></div>
<div style="position:absolute;left:1109px;top:787px;width:1px;height:1px;background:#9a9a9a"></div>
<div style="position:absolute;left:1226px;top:787px;width:1px;height:1px;background:#9a9a9a"></div>
<div style="position:absolute;left:1343px;top:787px;width:1px;height:1px;background:#9a9a9a"></div>
<div style="position:absolute;left:1459px;top:787px;width:1px;height:1px;background:#9a9a9a"></div>
<div style="position:absolute;left:1109px;top:822px;width:1px;height:1px;background:#9a9a9a"></div>
<div style="position:absolute;left:1226px;top:822px;width:1px;height:1px;background:#9a9a9a"></div>
<div style="position:absolute;left:1343px;top:822px;width:1px;height:1px;background:#9a9a9a"></div>
<div style="position:absolute;left:1459px;top:822px;width:1px;height:1px;background:#9a9a9a"></div>
<div style="position:absolute;left:1109px;top:856px;width:1px;height:1px;background:#9a9a9a"></div>
<div style="position:absolute;left:1226px;top:856px;width:1px;height:1px;background:#9a9a9a"></div>
<div style="position:absolute;left:1343px;top:856px;width:1px;height:1px;background:#9a9a9a"></div>
<div style="position:absolute;left:1459px;top:856px;width:1px;height:1px;background:#9a9a9a"></div>
<div style="position:absolute;left:698px;top:409px;width:838px;height:469px;overflow:hidden">
<div style="position:absolute;left:5.7999999999999545px;top:64.68px;font-size:19.75px;line-height:19.75px;color:#5a5040;font-weight:400;white-space:pre;">ф</div>
<div style="position:absolute;left:26.299999999999955px;top:64.68px;font-size:19.75px;line-height:19.75px;color:#5a5040;font-weight:400;white-space:pre;">382</div>
<div style="position:absolute;left:61.799999999999955px;top:64.68px;font-size:19.75px;line-height:19.75px;color:#5a5040;font-weight:400;white-space:pre;">в</div>
<div style="position:absolute;left:74px;top:64.68px;font-size:19.75px;line-height:19.75px;color:#5a5040;font-weight:400;white-space:pre;">м</div>
<div style="position:absolute;left:92.60000000000002px;top:64.68px;font-size:19.75px;line-height:19.75px;color:#5a5040;font-weight:400;white-space:pre;">777</div>
<div style="position:absolute;left:6px;top:99.78px;font-size:19.75px;line-height:19.75px;color:#5a5040;font-weight:400;white-space:pre;letter-spacing:-0.1px">у 197 пе 777</div>
<div style="position:absolute;left:7px;top:133.10px;font-size:30px;line-height:30px;color:#0a0ae0;font-weight:700;white-space:pre;">а447рс799</div>
<div style="position:absolute;left:6px;top:181.98px;font-size:19.75px;line-height:19.75px;color:#5a5040;font-weight:400;white-space:pre;letter-spacing:-0.45px">А 125 КУ 77</div>
<div style="position:absolute;left:6px;top:216.48px;font-size:19.75px;line-height:19.75px;color:#5a5040;font-weight:400;white-space:pre;letter-spacing:-0.25px">А 973 УА 77</div>
<div style="position:absolute;left:6px;top:249.28px;font-size:19.75px;line-height:19.75px;color:#5a5040;font-weight:400;white-space:pre;letter-spacing:0.26px">м296тм</div>
<div style="position:absolute;left:6px;top:282.18px;font-size:19.75px;line-height:19.75px;color:#5a5040;font-weight:400;white-space:pre;letter-spacing:0px">т453тс</div>
<div style="position:absolute;left:6px;top:315.78px;font-size:19.75px;line-height:19.75px;color:#5a5040;font-weight:400;white-space:pre;letter-spacing:0.33px">к167вт138</div>
<div style="position:absolute;left:6px;top:349.18px;font-size:19.75px;line-height:19.75px;color:#5a5040;font-weight:400;white-space:pre;letter-spacing:0.34px">с877нт</div>
<div style="position:absolute;left:6px;top:384.38px;font-size:19.75px;line-height:19.75px;color:#5a5040;font-weight:400;white-space:pre;letter-spacing:0px">х404ус</div>
<div style="position:absolute;left:6px;top:418.28px;font-size:19.75px;line-height:19.75px;color:#5a5040;font-weight:400;white-space:pre;letter-spacing:0.2px">в855вв</div>
<div style="position:absolute;left:6px;top:452.48px;font-size:19.75px;line-height:19.75px;color:#5a5040;font-weight:400;white-space:pre;letter-spacing:-0.26px">е162ра</div>
<div style="position:absolute;left:340px;top:63px;width:13px;height:29px;background:#ffd500"></div>
<div style="position:absolute;left:340px;top:97px;width:13px;height:30px;background:#ffd500"></div>
<div style="position:absolute;left:340px;top:132px;width:13px;height:43px;background:#ffd500"></div>
<div style="position:absolute;left:340px;top:382px;width:13px;height:30px;background:#ffd500"></div>
<div style="position:absolute;left:365px;top:180px;width:162px;height:29px;background:#90ee90;overflow:hidden">
<div style="position:absolute;left:0;top:0;width:155px;height:29px;overflow:hidden">
<div style="position:absolute;left:17px;top:5.28px;font-size:19.75px;line-height:19.75px;color:#5a5040;font-weight:400;white-space:pre;letter-spacing:0.7px">В рейсе</div>
</div></div>
<div style="position:absolute;left:365px;top:348px;width:279px;height:29px;background:#90ee90;overflow:hidden">
<div style="position:absolute;left:0;top:0;width:272px;height:29px;overflow:hidden">
<div style="position:absolute;left:17px;top:5.28px;font-size:19.75px;line-height:19.75px;color:#5a5040;font-weight:400;white-space:pre;letter-spacing:1.06px">На текущемремонте</div>
</div></div>
<div style="position:absolute;left:365px;top:417px;width:162px;height:29px;background:#90ee90;overflow:hidden">
<div style="position:absolute;left:0;top:0;width:155px;height:29px;overflow:hidden">
<div style="position:absolute;left:17px;top:5.28px;font-size:19.75px;line-height:19.75px;color:#5a5040;font-weight:400;white-space:pre;letter-spacing:1.06px">На текущемремонте</div>
</div></div>
<div style="position:absolute;left:365px;top:451px;width:395px;height:40px;background:#90ee90;overflow:hidden">
<div style="position:absolute;left:0;top:0;width:388px;height:40px;overflow:hidden">
<div style="position:absolute;left:17px;top:5.28px;font-size:19.75px;line-height:19.75px;color:#5a5040;font-weight:400;white-space:pre;letter-spacing:0.85px">На консервации исправен</div>
</div></div>
<div style="position:absolute;left:340px;top:280px;width:72px;height:30px;background:#ffd500;overflow:hidden">
<svg style="position:absolute;left:10px;top:2px;" width="20" height="26" viewBox="0 0 20 26"><path d="M9.2 22 C7.6 18.6 2.4 14 2.4 9.2 A6.8 6.8 0 0 1 16 9.2 C16 14 10.8 18.6 9.2 22Z" fill="#222"/><circle cx="9.2" cy="9" r="3.4" fill="#ffd500"/></svg>
<div style="position:absolute;left:0;top:0;width:64px;height:30px;overflow:hidden">
<div style="position:absolute;left:40px;top:9.78px;font-size:19.75px;line-height:19.75px;color:#5a5040;font-weight:400;white-space:pre;letter-spacing:1px">На</div>
</div>
</div>
</div>
<svg style="position:absolute;left:1540px;top:414px;" width="12" height="10" viewBox="0 0 12 10"><path d="M1 8.5 L11 8.5 L6 2Z" fill="#cfcfcf"/></svg>
<div style="position:absolute;left:1540px;top:435px;width:12px;height:419px;background:#d3d3d3;border-radius:6px"></div>
<div style="position:absolute;left:1540px;top:435px;width:12px;height:26px;background:#9a9a9a;border-radius:6px"></div>
<svg style="position:absolute;left:1540px;top:864px;" width="12" height="10" viewBox="0 0 12 10"><path d="M1 1.5 L11 1.5 L6 8Z" fill="#bdbdbd"/></svg>
<svg style="position:absolute;left:705px;top:882px;" width="9" height="12" viewBox="0 0 9 12"><path d="M8 1 L8 11 L1.5 6Z" fill="#c8c8c8"/></svg>
<div style="position:absolute;left:724px;top:882px;width:788px;height:12px;background:#d3d3d3;border-radius:6px"></div>
<div style="position:absolute;left:724px;top:882px;width:595px;height:12px;background:#9a9a9a;border-radius:6px"></div>
<svg style="position:absolute;left:1524px;top:882px;" width="9" height="12" viewBox="0 0 9 12"><path d="M1 1 L1 11 L7.5 6Z" fill="#bdbdbd"/></svg>
</body></html>
